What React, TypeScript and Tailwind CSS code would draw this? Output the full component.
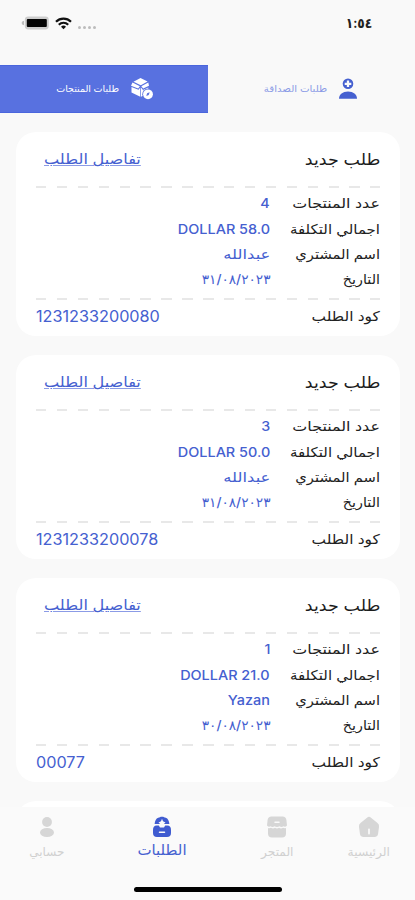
import React from "react";

interface Order {
  count: string;
  cost: string;
  buyer: string;
  buyerStretch: string;
  date: string;
  code: string;
}

const orders: Order[] = [
  {
    count: "4",
    cost: "DOLLAR 58.0",
    buyer: "عبدالله",
    buyerStretch: "scale-x-[1.26]",
    date: "٣١/٠٨/٢٠٢٣",
    code: "1231233200080",
  },
  {
    count: "3",
    cost: "DOLLAR 50.0",
    buyer: "عبدالله",
    buyerStretch: "scale-x-[1.26]",
    date: "٣١/٠٨/٢٠٢٣",
    code: "1231233200078",
  },
  {
    count: "1",
    cost: "DOLLAR 21.0",
    buyer: "Yazan",
    buyerStretch: "scale-x-[1.11]",
    date: "٣٠/٠٨/٢٠٢٣",
    code: "00077",
  },
];

const StatusBar: React.FC = () => (
  <div dir="ltr" className="flex h-[65px] items-start justify-between pl-[21px] pr-[43px] pt-[14px]">
    <div className="flex h-[18px] items-center">
      <svg width="28" height="14" viewBox="0 0 28 14">
        <path d="M3 4.800v4.400Q.6 8.800.6 7T3 4.800Z" fill="#bdbdbd" />
        <rect x="3.800" y="0.500" width="24" height="13" rx="3.400" fill="#cdcdcd" />
        <rect x="5.800" y="3" width="20" height="8" rx="1" fill="#050505" />
      </svg>
      <svg width="17" height="13" viewBox="0 0 17 13" className="ml-[6px]" fill="none" stroke="#111" strokeWidth="2.200">
        <path d="M1 4.700a10.600 10.600 0 0 1 15 0" />
        <path d="M3.800 7.700a6.700 6.700 0 0 1 9.400 0" />
        <path d="M6 9.700a3.600 3.600 0 0 1 5 0L8.500 12.300Z" fill="#111" stroke="none" />
      </svg>
      <div className="ml-[6px] mt-[9px] flex gap-[2.500px]">
        <i className="h-[3px] w-[2.500px] rounded-full bg-[#bcbcbc]" />
        <i className="h-[3px] w-[2.500px] rounded-full bg-[#bcbcbc]" />
        <i className="h-[3px] w-[2.500px] rounded-full bg-[#bcbcbc]" />
        <i className="h-[3px] w-[2.500px] rounded-full bg-[#bcbcbc]" />
      </div>
    </div>
    <span className="origin-right scale-x-[0.88] text-[14px] font-bold leading-[18px] text-[#222]">١:٥٤</span>
  </div>
);

const BoxIcon: React.FC = () => (
  <svg width="24" height="24" viewBox="0 0 24 24" fill="#fff">
    <path d="M10.500 1 17.600 4.600 10.800 8.200 3.500 4.700Z" />
    <path d="M2.500 5.600 9.900 9.300 8.200 11.600 1 8.700Z" />
    <path d="M18.300 5.600 11.300 9.300 13.200 11.600 19 8.700Z" />
    <path d="M1.500 9.900 8.500 12.800 10.300 10.600V19.800L1.500 15.600Z" />
    <path d="M11 10.600 13 12.900 18.300 10.500V13L13.500 18.500 11 19.800Z" />
    <circle cx="18" cy="17.300" r="5.700" fill="#5871e0" />
    <circle cx="18" cy="17.300" r="4.900" />
    <path d="m16.300 19 .8-2.800 2.600-1-1 2.800Z" fill="#5871e0" />
  </svg>
);

const AddFriendIcon: React.FC = () => (
  <svg width="20" height="22" viewBox="0 0 20 22" fill="#4560d0">
    <circle cx="10" cy="5.800" r="5.300" />
    <path d="M10 2.500v6.600M6.700 5.800h6.600" stroke="#fafafa" strokeWidth="2.300" />
    <path d="M1 20.700C1 16.500 4.800 13.500 10 13.500s9 3 9 7.200Z" />
  </svg>
);

const Tabs: React.FC = () => (
  <div className="flex h-[48px]">
    <div className="flex w-[207px] items-center pr-[57px]">
      <AddFriendIcon />
      <span className="mr-[11px] origin-right scale-x-[1.07] whitespace-nowrap text-[9.500px] text-[#8b9be6]">طلبات الصداقة</span>
    </div>
    <div className="flex w-[208px] items-center border-y border-[#4a66dd] bg-[#5871e0] pr-[54px]">
      <BoxIcon />
      <span className="mr-[11px] whitespace-nowrap text-[9.500px] text-white">طلبات المنتجات</span>
    </div>
  </div>
);

const DashedLine: React.FC = () => (
  <div className="h-[2px] bg-[repeating-linear-gradient(90deg,#e8e8e8_0_10.400px,transparent_10.400px_20.900px)]" />
);

interface RowProps {
  label: string;
  labelStretch: string;
  value: string;
  valueStretch: string;
}

const Row: React.FC<RowProps> = ({ label, labelStretch, value, valueStretch }) => (
  <div className="flex h-[25.200px] items-center">
    <span className={`w-[110px] origin-right whitespace-nowrap text-[13.500px] text-[#222] ${labelStretch}`}>{label}</span>
    <span className={`origin-right whitespace-nowrap pt-[1px] text-[13px] font-medium text-[#4560d0] ${valueStretch}`}>{value}</span>
  </div>
);

const OrderCard: React.FC<{ order: Order }> = ({ order }) => (
  <div className="h-[203.500px] shrink-0 rounded-[20px] bg-white px-5">
    <div className="flex h-[54px] items-center justify-between pl-2">
      <span className="origin-right scale-x-[1.09] text-[16px] text-[#1c1c1c]">طلب جديد</span>
      <span className="origin-left scale-x-[1.13] text-[14.300px] text-[#4560d0] underline decoration-[#8b9be6] decoration-1 underline-offset-1">تفاصيل الطلب</span>
    </div>
    <DashedLine />
    <div className="h-[109.500px] pt-[3px]">
      <Row label="عدد المنتجات" labelStretch="scale-x-[1.18]" value={order.count} valueStretch="scale-x-[1.1]" />
      <Row label="اجمالي التكلفة" labelStretch="scale-x-[1.11]" value={order.cost} valueStretch="scale-x-[1.11]" />
      <Row label="اسم المشتري" labelStretch="scale-x-[1.09]" value={order.buyer} valueStretch={order.buyerStretch} />
      <Row label="التاريخ" labelStretch="scale-x-[1.06]" value={order.date} valueStretch="scale-x-[1.05]" />
    </div>
    <DashedLine />
    <div className="flex h-[34px] items-center justify-between">
      <span className="origin-right scale-x-[1.14] text-[13.500px] text-[#222]">كود الطلب</span>
      <span className="origin-left scale-x-[1.06] pt-[1px] text-[15.300px] text-[#4560d0]">{order.code}</span>
    </div>
  </div>
);

const HomeIcon: React.FC = () => (
  <svg width="22" height="22" viewBox="0 0 22 22">
    <path d="M9 1.700Q11 0 13 1.700L19.500 7Q21.500 8.700 21 11l-1 7.300Q19.300 21 16.500 21H5.500Q2.700 21 2 18.300L1 11Q.5 8.700 2.500 7Z" fill="#d6d6d6" />
    <path d="M11 13.500v4" stroke="#fafafa" strokeWidth="1.800" strokeLinecap="round" />
  </svg>
);

const StoreIcon: React.FC = () => (
  <svg width="22" height="22" viewBox="0 0 22 22" fill="#d6d6d6">
    <path d="M5.500.5h11q3.500 0 3.900 3.500l.6 5.500q-1.800 2-3.500.8-2 1.600-4 0-2.500 1.600-5 0-2 1.600-4 0Q2.800 11.500 1 9.500L1.600 4Q2 .5 5.500.5Z" />
    <path d="M2 12q1.500.6 3-.2 2 1.300 4 0 2 1.300 4 0 2 1.300 4 0 1.500.8 3 .2v5.500q0 4-4 4H6q-4 0-4-4Z" />
    <path d="M9 6.200h4" stroke="#fafafa" strokeWidth="1.500" strokeLinecap="round" />
  </svg>
);

const OrdersIcon: React.FC = () => (
  <svg width="20" height="22" viewBox="0 0 20 22" fill="#3f5bd0">
    <path d="M10 .8c2 0 2.200.7 3.800 1 2.200.5 3.200 3.300 3.600 6.200H2.600C3 5.100 4 2.300 6.200 1.800 7.800 1.500 8 .8 10 .8Z" />
    <path d="M1 14q0-4.500 3.600-4.500h2.200L8 11.500h4l1.200-2h2.200Q19 9.500 19 14v3q0 4-4 4H5q-4 0-4-4Z" />
    <path d="m10 2.800 1 2.500 2.500 1.200L10 9.800 6.500 6.500 9 5.300Z" fill="#fafafa" />
    <path d="M7.500 16.300h5" stroke="#fafafa" strokeWidth="1.500" strokeLinecap="round" />
  </svg>
);

const UserIcon: React.FC = () => (
  <svg width="16" height="22" viewBox="0 0 16 22" fill="#d6d6d6">
    <circle cx="8" cy="6" r="4.900" />
    <ellipse cx="8" cy="16.500" rx="7" ry="4.500" />
  </svg>
);

const BottomNav: React.FC = () => (
  <nav className="absolute bottom-0 left-0 h-[93px] w-full bg-[#fafafa]">
    <div className="flex h-[60px] pr-[24px] pt-[9px] text-[11.500px] text-[#d0d0d0]">
      <div className="flex w-[44px] flex-col items-center">
        <HomeIcon />
        <span className="scale-x-[1.07] whitespace-nowrap leading-[28px]">الرئيسية</span>
      </div>
      <div className="mr-[52px] flex w-[36px] flex-col items-center">
        <StoreIcon />
        <span className="scale-x-[1.06] whitespace-nowrap leading-[28px]">المتجر</span>
      </div>
      <div className="mr-[73px] flex w-[48px] flex-col items-center text-[#4560d0]">
        <OrdersIcon />
        <span className="scale-x-[1.07] whitespace-nowrap text-[14px] leading-[24px]">الطلبات</span>
      </div>
      <div className="mr-[73px] flex w-[36px] flex-col items-center">
        <UserIcon />
        <span className="scale-x-[1.04] whitespace-nowrap leading-[28px]">حسابي</span>
      </div>
    </div>
    <div className="mx-auto mt-[20px] h-[5px] w-[148px] rounded-full bg-black" />
  </nav>
);

const App: React.FC = () => {
  return (
    <div
      dir="rtl"
      className="relative h-[900px] w-[415px] overflow-hidden bg-[#f9f9f9] font-['Inter','DejaVu_Sans',sans-serif]">
      <StatusBar />
      <Tabs />
      <div className="flex flex-col gap-[19.500px] pl-[16px] pr-[15px] pt-[19px]">
        {orders.map((order) => (
          <OrderCard key={order.code} order={order} />
        ))}
        <div className="h-[60px] shrink-0 rounded-[20px] bg-white" />
      </div>
      <BottomNav />
    </div>
  );
};

export default App;
